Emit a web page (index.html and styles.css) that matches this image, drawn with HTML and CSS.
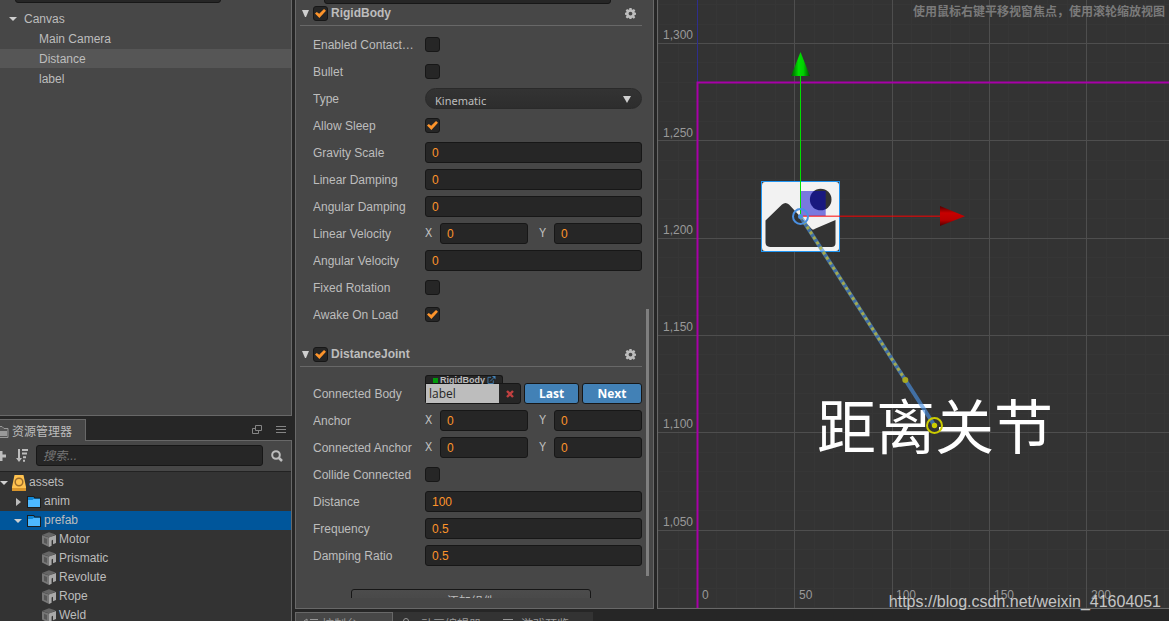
FILE: index.html
```html
<!DOCTYPE html>
<html lang="zh-CN">
<head>
<meta charset="utf-8">
<title>Scene editor</title>
<link rel="stylesheet" href="styles.css">
</head>
<body>
<svg class="defs" aria-hidden="true">
  <symbol id="gear" viewBox="0 0 12 12"><path fill-rule="evenodd" d="M4.800 0h2.400l.3 1.700.8.3 1.400-1 1.600 1.600-1 1.400.4.9 1.300.2v2.300l-1.400.3-.4.900 1 1.400-1.600 1.600-1.400-1-.9.3-.2 1.100H4.800l-.3-1.200-.8-.3-1.400 1L.7 9.900l1-1.400-.4-.9L0 7.400V5.100l1.300-.2.400-.9-1-1.400L2.300 1l1.400 1 .8-.3zM6 4a2 2 0 1 0 0 4.200A2 2 0 0 0 6 4z"/></symbol>
  <symbol id="cube" viewBox="0 0 14 15"><path fill="#666" d="M0 3 7 .3 13.700 2.600 7.400 5.400z"/><path fill="#777" d="M0 3.200 7 5.600V15L0 11.500z"/><path fill="#585858" d="M2 5.800 5 7v5L2 10.700z"/><path fill="#a9a9a9" d="M7 5.600 14 3v8l-3 1.300V7.800L9.600 8.500v5.200L7 15z"/></symbol>
  <symbol id="folder" viewBox="0 0 14 12"><path fill="#1c1c1c" d="M0 0h7l1 1.500h6V12H0z"/><path fill="#0f87d6" d="M1 1h5.500l1 1.500H13V5H1z"/><path fill="#4db8ff" d="M1 4h4.500l1-1H13v8H1z"/></symbol>
</svg>
<main class="editor">
  <aside class="side">
    <section class="panel hierarchy">
      <input class="field hierarchy-search" type="text" aria-label="Search nodes">
      <ul class="nodes">
        <li class="node root"><i class="caret down"></i>Canvas</li>
        <li class="node">Main Camera</li>
        <li class="node active">Distance</li>
        <li class="node">label</li>
      </ul>
    </section>
    <section class="assets">
      <header class="tabbar">
        <div class="tab"><svg width="9" height="13" viewBox="0 0 9 13"><path fill="#555" stroke="#999" d="M-5 11.500V2.500h1V.5h6l2 2h4v9z"/><path fill="#999" d="M-5 5H7v5h-12z"/></svg>资源管理器</div>
        <div class="tab-tools">
          <button class="icon" aria-label="Float"><svg width="10" height="10" viewBox="0 0 10 10" fill="none" stroke="#858585"><path d="M3.500.5h6v5h-6zM3 3.500H.500v5h6V6"/></svg></button>
          <button class="icon" aria-label="Menu"><svg width="10" height="8" viewBox="0 0 10 8" stroke="#858585"><path d="M0 .5h10M0 3.500h10M0 6.500h10"/></svg></button>
        </div>
      </header>
      <div class="toolbar">
        <button class="icon plus" aria-label="Add"><svg width="6" height="10" viewBox="0 0 6 10"><path fill="#bdbdbd" d="M-3 3.500h3V0h2.500v3.500H6v3H2.500V10H0V6.500h-3z"/></svg></button>
        <button class="icon sort" aria-label="Sort"><svg width="12" height="13" viewBox="0 0 12 13" fill="#bdbdbd"><path d="M2 0h2v9h2l-3 4-3-4h2zM6 0h6v2H6zM6 3.600h5v2H6zM7 7.200h3v2H7zM7 10.800h2v2H7z"/></svg></button>
        <input class="field search" type="text" placeholder="搜索..." aria-label="搜索">
        <button class="icon" aria-label="Find"><svg width="12" height="12" viewBox="0 0 12 12" fill="none" stroke="#bdbdbd"><circle cx="5" cy="5" r="3.800" stroke-width="2"/><path d="m8 8 3 3" stroke-width="2.500"/></svg></button>
      </div>
      <ul class="files">
        <li class="file d0"><i class="caret down"></i><svg width="14" height="16" viewBox="0 0 14 16"><path fill="#ffc24f" d="M2.500 0h9L14 12v4H0v-4z"/><path fill="#d9952b" d="M0 13h14v3H0z"/><circle cx="7" cy="7" r="3.800" fill="#ffc24f" stroke="#9d6d2c" stroke-width="1.500"/></svg>assets</li>
        <li class="file d1"><i class="caret right"></i><svg width="14" height="12"><use href="#folder"/></svg>anim</li>
        <li class="file d1 active"><i class="caret down"></i><svg width="14" height="12"><use href="#folder"/></svg>prefab</li>
        <li class="file d2"><svg width="14" height="15"><use href="#cube"/></svg>Motor</li>
        <li class="file d2"><svg width="14" height="15"><use href="#cube"/></svg>Prismatic</li>
        <li class="file d2"><svg width="14" height="15"><use href="#cube"/></svg>Revolute</li>
        <li class="file d2"><svg width="14" height="15"><use href="#cube"/></svg>Rope</li>
        <li class="file d2"><svg width="14" height="15"><use href="#cube"/></svg>Weld</li>
      </ul>
    </section>
  </aside>

  <div class="middle">
    <section class="panel inspector">
      <div class="scroll">
        <div class="node-head"><input class="check" type="checkbox" aria-label="Active"><input class="field" type="text" aria-label="Name"></div>
        <section class="component">
          <header class="head"><i class="fold"></i><input class="check" type="checkbox" checked id="rb"><label for="rb">RigidBody</label><button class="icon" aria-label="RigidBody settings"><svg width="11" height="11" fill="#bdbdbd"><use href="#gear"/></svg></button></header>
          <div class="props">
            <div class="prop"><label for="p1">Enabled Contact Listener</label><input class="check" type="checkbox" id="p1"></div>
            <div class="prop"><label for="p2">Bullet</label><input class="check" type="checkbox" id="p2"></div>
            <div class="prop"><label for="p3">Type</label><span class="select"><select id="p3"><option>Kinematic</option></select></span></div>
            <div class="prop"><label for="p4">Allow Sleep</label><input class="check" type="checkbox" checked id="p4"></div>
            <div class="prop"><label for="p5">Gravity Scale</label><input class="field" id="p5" value="0"></div>
            <div class="prop"><label for="p6">Linear Damping</label><input class="field" id="p6" value="0"></div>
            <div class="prop"><label for="p7">Angular Damping</label><input class="field" id="p7" value="0"></div>
            <div class="prop"><span>Linear Velocity</span><div class="vec"><label for="p8x">X</label><input class="field" id="p8x" value="0"><label for="p8y">Y</label><input class="field" id="p8y" value="0"></div></div>
            <div class="prop"><label for="p9">Angular Velocity</label><input class="field" id="p9" value="0"></div>
            <div class="prop"><label for="p10">Fixed Rotation</label><input class="check" type="checkbox" id="p10"></div>
            <div class="prop"><label for="p11">Awake On Load</label><input class="check" type="checkbox" checked id="p11"></div>
          </div>
        </section>
        <section class="component">
          <header class="head"><i class="fold"></i><input class="check" type="checkbox" checked id="dj"><label for="dj">DistanceJoint</label><button class="icon" aria-label="DistanceJoint settings"><svg width="11" height="11" fill="#bdbdbd"><use href="#gear"/></svg></button></header>
          <div class="props">
            <div class="prop"><label for="q1">Connected Body</label>
              <div class="body-ref">
                <div class="ref">
                  <span class="ref-type"><i></i>RigidBody<svg width="9" height="8" viewBox="0 0 9 9" fill="none" stroke="#4281b6"><path d="M4 1.500H.500v7h6V5M3 6l4-4"/><path fill="#4281b6" stroke="none" d="M5 0h4v4z"/></svg></span>
                  <span class="ref-box"><input id="q1" value="label"><button class="icon" aria-label="Clear"><svg width="8" height="8" viewBox="0 0 8 8" stroke="#c04040" stroke-width="2.400"><path d="m1 1 6 6M7 1 1 7"/></svg></button></span>
                </div>
                <button class="blue">Last</button><button class="blue">Next</button>
              </div>
            </div>
            <div class="prop"><span>Anchor</span><div class="vec"><label for="q2x">X</label><input class="field" id="q2x" value="0"><label for="q2y">Y</label><input class="field" id="q2y" value="0"></div></div>
            <div class="prop"><span>Connected Anchor</span><div class="vec"><label for="q3x">X</label><input class="field" id="q3x" value="0"><label for="q3y">Y</label><input class="field" id="q3y" value="0"></div></div>
            <div class="prop"><label for="q4">Collide Connected</label><input class="check" type="checkbox" id="q4"></div>
            <div class="prop"><label for="q5">Distance</label><input class="field" id="q5" value="100"></div>
            <div class="prop"><label for="q6">Frequency</label><input class="field" id="q6" value="0.5"></div>
            <div class="prop"><label for="q7">Damping Ratio</label><input class="field" id="q7" value="0.5"></div>
          </div>
        </section>
        <button class="add">添加组件</button>
      </div>
      <i class="thumb"></i>
    </section>
  </div>

  <section class="scene">
    <svg class="stage" role="img" aria-label="Scene view">
      <g id="grid"></g>
      <path stroke="#2e2e8c" d="M39.500 0v82"/>
      <path fill="none" stroke="#a800a8" stroke-width="2" d="M39.500 620V82.500h3000"/>
      <g class="axis">
        <text x="5" y="39">1,300</text><text x="5" y="137">1,250</text><text x="5" y="234">1,200</text><text x="5" y="331">1,150</text><text x="5" y="428">1,100</text><text x="5" y="526">1,050</text>
        <text x="44" y="599">0</text><text x="141" y="599">50</text><text x="238" y="599">100</text><text x="336" y="599">150</text><text x="433" y="599">200</text>
      </g>
      <text class="hint" x="255" y="16">使用鼠标右键平移视窗焦点，使用滚轮缩放视图</text>
      <rect x="103.500" y="181.500" width="78" height="70" fill="#333" stroke="#2196f3"/>
      <rect x="104" y="182" width="77" height="69" rx="3" fill="#f2f2f2"/>
      <path fill="#333" d="M107.500 220.500 124 204.500q3.500-3 7 0l23 24.700q1 1 3-.5l20.500-8.700V243q0 4-4 4H112q-4.500-.5-4.500-4.500z"/>
      <circle cx="162.700" cy="199.500" r="10.800" fill="#333"/>
      <rect x="142.500" y="191" width="25.200" height="25" fill="#0000cc" fill-opacity=".5"/>
      <text class="label" x="159" y="449">距离关节</text>
      <path stroke="#00e000" d="M142.500 76v140"/>
      <linearGradient id="gg"><stop stop-color="#005500"/><stop offset=".4" stop-color="#00e000"/><stop offset=".65" stop-color="#00d000"/><stop offset="1" stop-color="#004800"/></linearGradient>
      <path fill="url(#gg)" d="M142.500 52 152 76h-19z"/>
      <path stroke="#ff0000" stroke-opacity=".65" stroke-width="1.500" d="M142 216.300h140"/>
      <linearGradient id="rg" x2="0" y2="1"><stop stop-color="#500000"/><stop offset=".35" stop-color="#c80000"/><stop offset=".7" stop-color="#b80000"/><stop offset="1" stop-color="#500000"/></linearGradient>
      <path fill="url(#rg)" d="M307 216.300 282 206v20z"/>
      <path stroke="#4a90e2" stroke-opacity=".65" stroke-width="4" d="M142.500 216.500 276.500 425.500"/>
      <path stroke="#b4b440" stroke-opacity=".85" stroke-width="3" stroke-dasharray="3 3" d="M142.500 216.500 247.300 380"/>
      <circle cx="142.500" cy="216.500" r="7.500" fill="none" stroke="#4a90e2" stroke-width="2"/>
      <circle cx="142.500" cy="216.500" r="2.500" fill="#4a90e2"/>
      <circle cx="247.300" cy="380" r="3" fill="#a8a820"/>
      <circle cx="276.500" cy="425.500" r="7.500" fill="none" stroke="#cccc00" stroke-width="2"/>
      <circle cx="276.500" cy="425.500" r="2.700" fill="#cccc00"/>
    </svg>
  </section>

  <footer class="dock">
    <div class="dock-tab active"><svg width="14" height="12" viewBox="0 0 14 12"><path fill="none" stroke="#999" d="m0 3 3-2v9M6 1.500h8M6 4.500h8M6 7.500h8"/></svg>控制台</div>
    <div class="dock-tab wide"><svg width="14" height="12" viewBox="0 0 14 12" fill="none" stroke="#999"><circle cx="3" cy="3" r="2.500"/><path d="M8 5h4v6H1V6"/></svg>动画编辑器</div>
    <div class="dock-tab"><svg width="14" height="12" viewBox="0 0 14 12" fill="none" stroke="#999"><path d="M0 1.500h10M2 4.500h9v6H2z"/></svg>游戏预览</div>
  </footer>
  <p class="watermark">https://blog.csdn.net/weixin_41604051</p>
</main>
<script src="grid.js"></script>
</body>
</html>
```
FILE: styles.css
```css
* { box-sizing: border-box; }
body {
  margin: 0;
  background: #262626;
  color: #bdbdbd;
  font: 12px/19px "Liberation Sans", "Noto Sans CJK SC", sans-serif;
  overflow: hidden;
}
ul { list-style: none; margin: 0; padding: 0; }
input, select, button { font: inherit; color: inherit; margin: 0; border-radius: 0; }
svg { display: block; flex: none; }
.defs { position: absolute; width: 0; height: 0; }

.editor {
  position: relative;
  display: grid;
  grid-template-columns: 292px 359px minmax(0, 1fr);
  grid-template-rows: minmax(0, 1fr) 9px;
  gap: 3px;
  height: 100vh;
}
.side { grid-row: 1 / 3; display: flex; flex-direction: column; gap: 3px; min-height: 0; }
.panel { background: #474747; border: 1px solid #686868; border-top: 0; }
.icon { display: flex; align-items: center; justify-content: center; padding: 0; border: 0; background: none; }
.field {
  width: 100%;
  min-width: 0;
  height: 21px;
  padding: 1px 6px 0;
  background: #262626;
  border: 1px solid #171717;
  border-radius: 3px;
  color: #fd942b;
}

.caret { width: 0; height: 0; flex: none; }
.caret.down { border: 4px solid transparent; border-top-color: #cfcfcf; border-bottom: 0; }
.caret.right { border: 4px solid transparent; border-left: 5px solid #bdbdbd; border-right: 0; }

.hierarchy { flex: 2; border-left: 0; overflow: hidden; min-height: 0; }
.hierarchy-search { display: block; width: 206px; margin: -18px 0 6px 15px; }
.node { height: 19px; margin-bottom: 1px; padding: 1px 0 0 39px; }
.node.root { display: flex; align-items: center; gap: 7px; padding-left: 9px; }
.node.active { background: #565656; }

.assets { flex: none; height: 202px; display: flex; flex-direction: column; }
.tabbar { display: flex; justify-content: space-between; height: 21px; }
.tab {
  position: relative;
  display: flex;
  align-items: center;
  gap: 3px;
  width: 86px;
  height: 22px;
  padding-top: 3px;
  background: #474747;
  border: 1px solid #686868;
  border-width: 1px 1px 0 0;
  white-space: nowrap;
  z-index: 1;
}
.tab-tools { display: flex; gap: 14px; align-items: center; padding-right: 6px; }
.toolbar {
  display: flex;
  align-items: center;
  height: 31px;
  padding: 0 8px 1px 0;
  background: #474747;
  border: 1px solid #686868;
  border-width: 1px 1px 0 0;
}
.plus { width: 6px; margin-right: 10px; }
.sort { width: 12px; margin-right: 8px; }
.search { flex: 1; margin-right: 8px; color: #bdbdbd; }
.search::placeholder { color: #757575; font-style: italic; }
.files {
  flex: 1;
  min-height: 0;
  overflow: hidden;
  background: #333;
  border: 1px solid #686868;
  border-width: 0 1px 0 0;
  box-shadow: inset 0 -1px #333, inset 0 1px #222;
  padding-top: 2px;
}
.file { display: flex; align-items: center; gap: 3px; height: 19px; }
.file .caret { margin-right: 1px; }
.file.d1 { padding-left: 14px; }
.file.d1 .down { margin-right: 2px; }
.file.d1 .right { margin: 0 3px 0 2px; }
.file.d2 { padding-left: 42px; }
.file.active { background: #00569b; }

.middle { display: flex; min-height: 0; }
.inspector { position: relative; flex: 1; display: flex; padding: 0 11px 10px 4px; min-width: 0; }
.scroll { flex: 1; overflow: hidden; min-width: 0; }
.thumb { position: absolute; right: 4px; top: 309px; width: 3px; height: 267px; background: #7f7f7f; }
.node-head { display: flex; gap: 2px; width: 304px; margin: -17px 0 1px 7px; }
.component { margin-bottom: 21px; }
.head { display: flex; align-items: center; height: 21px; padding: 0 6px 3px 0; border-bottom: 1px solid #686868; font-weight: bold; }
.head .check { margin-right: 3px; }
.head label { flex: 1; }
.fold { width: 7px; margin: 0 4px 0 2px; border: solid transparent; border-width: 7px 3px 0; border-top-color: #cfcfcf; }
.props { display: flex; flex-direction: column; gap: 6px; padding: 8px 0 0 13px; }
.prop { display: grid; grid-template-columns: 102px minmax(0, 1fr); column-gap: 10px; align-items: end; line-height: 23px; }
.prop > label, .prop > span:first-child { height: 21px; overflow: hidden; text-overflow: ellipsis; white-space: nowrap; }
.check {
  appearance: none;
  display: grid;
  place-items: center;
  flex: none;
  width: 15px;
  height: 15px;
  background: #262626;
  border: 1px solid #171717;
  border-radius: 3px;
}
.prop .check { margin: 3px 0; }
.check:checked::before {
  content: "";
  width: 11px;
  height: 9px;
  background: #fd942b;
  clip-path: polygon(0 50%, 16% 32%, 38% 54%, 82% 0, 100% 20%, 40% 100%);
}
.select { position: relative; }
.select::after { content: ""; position: absolute; right: 11px; top: 8px; border: solid transparent; border-width: 7px 4px 0; border-top-color: #cfcfcf; pointer-events: none; }
.select, .select select { display: block; width: 100%; height: 21px; }
.select select {
  appearance: none;
  padding: 0 9px;
  border: 1px solid #2a2a2a;
  border-radius: 11px;
  background: linear-gradient(#333, #2d2d2d);
  font-family: "Noto Sans", sans-serif;
  font-size: 11px;
}
.vec { display: grid; grid-template-columns: 15px minmax(0, 1fr) 26px minmax(0, 1fr); height: 21px; }
.vec label { font-family: "Liberation Mono", monospace; }
.vec label + input + label { padding-left: 11px; }
.body-ref { display: grid; grid-template-columns: 96fr 55fr 60fr; gap: 3px; align-items: end; }
.ref { min-width: 0; }
.ref-type {
  display: flex;
  align-items: center;
  width: 78px;
  height: 9px;
  margin-bottom: -1px;
  padding-left: 7px;
  background: #262626;
  border: 1px solid #171717;
  border-bottom: 0;
  border-radius: 3px 3px 0 0;
  font-size: 9px;
  line-height: 9px;
  font-weight: bold;
}
.ref-type i { width: 5px; height: 5px; margin-right: 2px; background: #00990a; }
.ref-type svg { margin-left: 2px; }
.ref-box { display: grid; grid-template-columns: minmax(0, 1fr) 21px; height: 21px; background: #262626; border: 1px solid #171717; border-radius: 0 3px 3px 3px; }
.ref-box input { min-width: 0; height: 19px; padding: 0 3px; border: 0; background: #bdbdbd; color: #262626; font-family: "Open Sans", sans-serif; }
.blue { height: 21px; padding: 0; background: #4281b6; border: 1px solid #171717; border-radius: 3px; color: #fff; font: bold 12px/19px "Open Sans", sans-serif; }
.add { display: block; width: 240px; height: 27px; margin: 23px auto 0; padding: 0; background: linear-gradient(#4c4c4c, #444); border: 1px solid #171717; border-radius: 3px; }
.component:nth-of-type(2) { margin-bottom: 0; }

.scene { background: #333; border: 1px solid #686868; border-width: 0 0 1px 1px; overflow: hidden; min-width: 0; min-height: 0; }
.stage { width: 100%; height: 100%; }
.axis { fill: #999; }
.hint { fill: #7a7a7a; font-weight: bold; }
.label { fill: #fff; font-size: 59px; font-family: "Noto Sans CJK SC", sans-serif; }
.minor { stroke: #363636; }
.major { stroke: #4e4e4e; }

.dock { grid-column: 2 / 4; display: flex; align-items: start; overflow: hidden; }
.dock-tab { display: flex; gap: 4px; width: 90px; height: 24px; padding: 5px 0 0 0; background: #333; color: #999; white-space: nowrap; line-height: 17px; }
.dock-tab svg { margin-top: 1px; }
.dock-tab.wide { width: 110px; padding-left: 10px; }
.dock-tab.active { width: 98px; padding: 4px 0 0 8px; background: #474747; border: 1px solid #686868; }
.watermark { position: absolute; right: 8px; bottom: 9px; margin: 0; color: rgba(225, 225, 225, .85); font-size: 16px; line-height: 20px; }
```
FILE: grid.js
```js
(function () {
  var stage = document.querySelector('.stage');
  var grid = document.getElementById('grid');
  var step = 97.3;

  function line(kind, d) {
    var path = document.createElementNS('http://www.w3.org/2000/svg', 'path');
    path.setAttribute('class', kind);
    path.setAttribute('d', d);
    grid.appendChild(path);
  }

  function draw() {
    var box = stage.getBoundingClientRect();
    var minor = '';
    var major = '';
    grid.textContent = '';
    for (var i = -2; 39 + i * step / 5 < box.width; i++) {
      var x = Math.round(39 + i * step / 5) + 0.5;
      if (i % 5) minor += 'M' + x + ' 0V' + box.height;
      else major += 'M' + x + ' 0V' + box.height;
    }
    for (var j = -2; 43 + j * step / 5 < box.height; j++) {
      var y = Math.round(43 + j * step / 5) + 0.5;
      if (j % 5) minor += 'M0 ' + y + 'H' + box.width;
      else major += 'M0 ' + y + 'H' + box.width;
    }
    line('minor', minor);
    line('major', major);
  }

  draw();
  window.addEventListener('resize', draw);
})();
```
